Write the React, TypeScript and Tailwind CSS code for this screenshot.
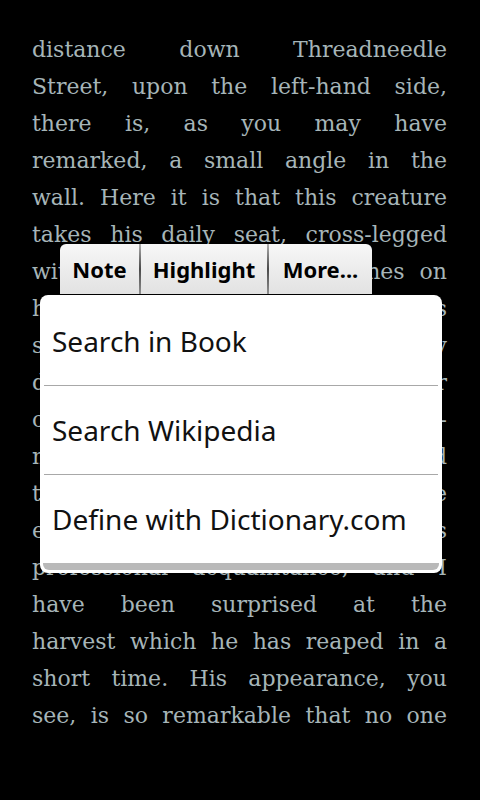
import React from 'react';

const lines = [
  'distance down Threadneedle',
  'Street, upon the left-hand side,',
  'there is, as you may have',
  'remarked, a small angle in the',
  'wall. Here it is that this creature',
  'takes his daily seat, cross-legged',
  'with his tiny stock of matches on',
  'his lap, and as he is a piteous',
  'spectacle a small rain of charity',
  'descends into the greasy leather',
  'cap which lies upon the pave-',
  'ment beside him. I have watched',
  'the fellow more than once before',
  'ever I thought of making his',
  'professional acquaintance, and I',
  'have been surprised at the',
  'harvest which he has reaped in a',
  'short time. His appearance, you',
  'see, is so remarkable that no one',
];

const actions = ['Note', 'Highlight', 'More...'];
const menuItems = ['Search in Book', 'Search Wikipedia', 'Define with Dictionary.com'];

export default function App() {
  return (
    <div className="relative w-[480px] h-[800px] bg-black overflow-hidden">
      <div className="pt-[31px] pl-8 pr-[33px] font-['DejaVu_Serif',serif] text-[22px] leading-[37px] text-[#a6b5b8]">
        {lines.map((line, i) => (
          <div key={i} className="text-justify [text-align-last:justify]">
            {line}
          </div>
        ))}
      </div>

      {/* selection action bar */}
      <div className="absolute left-[60px] top-[244px] w-[312px] h-[50px] flex rounded-t-[6px] overflow-hidden bg-gradient-to-b from-[#f7f7f7] to-[#e2e2e2] font-['Noto_Sans',sans-serif] font-bold text-[22px] text-black">
        {actions.map((a, i) => (
          <React.Fragment key={a}>
            {i > 0 && (
              <div className="w-[2px] shrink-0 bg-gradient-to-b from-[#b0b0b0] via-[#4a4a4a] to-[#909090]" />
            )}
            <div
              className={
                'flex items-center justify-center ' +
                (i === 0 ? 'w-[79px]' : i === 1 ? 'w-[126px]' : 'flex-1')
              }
            >
              {a}
            </div>
          </React.Fragment>
        ))}
      </div>

      {/* context menu */}
      <div className="absolute left-[40px] top-[295px] w-[402px] bg-white rounded-[8px] px-[3px] pb-[3px] pt-[2px] font-['Noto_Sans',sans-serif] text-[28px] text-[#111111]">
        {menuItems.map((item, i) => (
          <div key={item}>
            {i > 0 && <div className="mx-[1px] h-px bg-[#a8a8a8]" />}
            <div className="h-[88px] flex items-center pl-[9px]">{item}</div>
          </div>
        ))}
        <div className="h-[7px] bg-[#b9b9b9] rounded-b-[6px]" />
      </div>
    </div>
  );
}
